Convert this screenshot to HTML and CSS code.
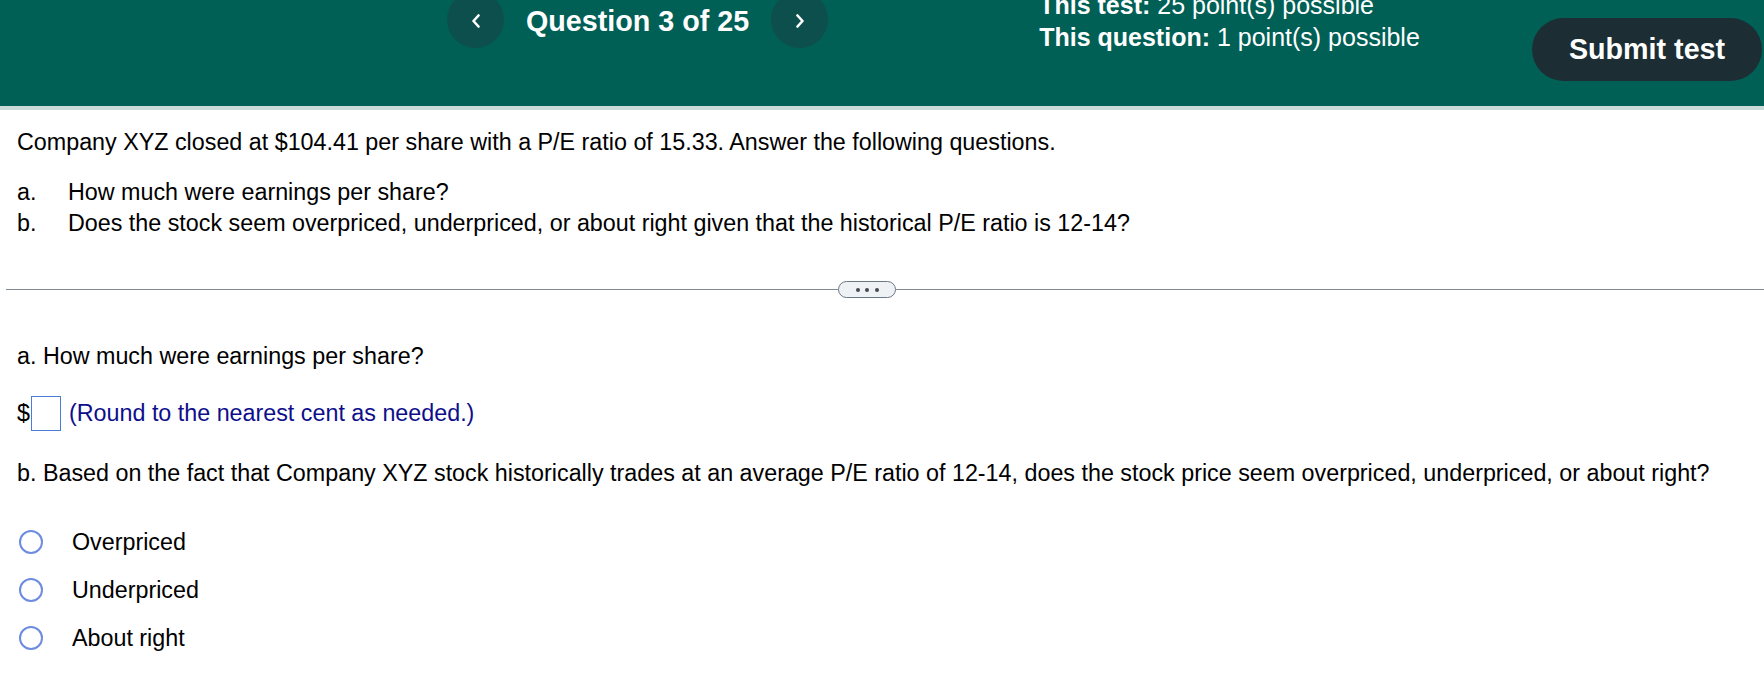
FILE: index.html
```html
<!DOCTYPE html>
<html>
<head>
<meta charset="utf-8">
<link rel="stylesheet" href="styles.css">
</head>
<body>
<header class="topbar">
  <div class="nav">
    <button class="navbtn" aria-label="Previous">
      <svg width="10" height="14" viewBox="0 0 10 14"><polyline points="7.5,1.5 2.5,7 7.5,12.5" fill="none" stroke="#fff" stroke-width="2.6" stroke-linecap="round" stroke-linejoin="round"/></svg>
    </button>
    <h1 class="qtitle">Question 3 of 25</h1>
    <button class="navbtn" aria-label="Next">
      <svg width="10" height="14" viewBox="0 0 10 14"><polyline points="2.5,1.5 7.5,7 2.5,12.5" fill="none" stroke="#fff" stroke-width="2.6" stroke-linecap="round" stroke-linejoin="round"/></svg>
    </button>
  </div>
  <div class="points">
    <div><b>This test:</b> 25 point(s) possible</div>
    <div><b>This question:</b> 1 point(s) possible</div>
  </div>
  <div class="rightcol">
    <svg class="topicon" width="20" height="14" viewBox="0 0 20 14"><path d="M3 0 Q3 4 10 4 Q17 4 17 0" fill="none" stroke="#fff" stroke-width="2.4"/><circle cx="10" cy="-2" r="3" fill="#fff"/></svg>
    <button class="submit">Submit test</button>
  </div>
</header>

<main class="content">
  <p class="stem">Company XYZ closed at $104.41 per share with a P/E ratio of 15.33. Answer the following questions.</p>
  <ol class="parts">
    <li><span class="lbl">a.</span><span>How much were earnings per share?</span></li>
    <li><span class="lbl">b.</span><span>Does the stock seem overpriced, underpriced, or about right given that the historical P/E ratio is 12-14?</span></li>
  </ol>

  <div class="divider">
    <span class="line line-left"></span>
    <button class="more" aria-label="More"><i></i><i></i><i></i></button>
    <span class="line line-right"></span>
  </div>

  <p class="q">a. How much were earnings per share?</p>
  <div class="answer">
    <span class="dollar">$</span>
    <span class="inputbox"></span>
    <span class="hint">(Round to the nearest cent as needed.)</span>
  </div>

  <p class="q qb">b. Based on the fact that Company XYZ stock historically trades at an average P/E ratio of 12-14, does the stock price seem overpriced, underpriced, or about right?</p>
  <div class="options">
    <label class="opt"><span class="radio"></span><span>Overpriced</span></label>
    <label class="opt"><span class="radio"></span><span>Underpriced</span></label>
    <label class="opt"><span class="radio"></span><span>About right</span></label>
  </div>
</main>
</body>
</html>
```
FILE: styles.css
```css
* { box-sizing: border-box; }
html, body { margin: 0; padding: 0; }
body {
  width: 1764px;
  height: 674px;
  overflow: hidden;
  background: #fff;
  color: #000;
  font-family: "Liberation Sans", Arial, sans-serif;
}

.topbar {
  height: 110px;
  background: #006056;
  border-bottom: 4px solid #c9dcda;
  display: flex;
  align-items: flex-start;
  overflow: hidden;
  color: #fff;
}

.nav {
  display: flex;
  align-items: center;
  margin-left: 447px;
  margin-top: -9px;
  gap: 22px;
  height: 57px;
}
.navbtn {
  width: 57px;
  height: 57px;
  border-radius: 50%;
  border: none;
  background: #0d4f4c;
  padding: 0;
  display: flex;
  align-items: center;
  justify-content: center;
}
.navbtn svg { display: block; margin-top: 3px; }
.qtitle {
  margin: 0;
  font-size: 28.7px;
  font-weight: bold;
  line-height: 57px;
  padding-top: 3px;
  white-space: nowrap;
}

.points {
  margin-left: 211px;
  margin-top: -11px;
  font-size: 25px;
  line-height: 32px;
  white-space: nowrap;
}

.rightcol {
  margin-left: auto;
  margin-right: 2px;
  display: flex;
  flex-direction: column;
  align-items: flex-end;
}
.topicon {
  display: block;
  margin-top: -9px;
  margin-right: 51px;
  height: 14px;
}
.submit {
  margin-top: 13px;
  width: 230px;
  height: 63px;
  border: none;
  border-radius: 32px;
  background: #1c2d34;
  color: #fff;
  font-family: "Liberation Sans", Arial, sans-serif;
  font-size: 28.7px;
  font-weight: bold;
  padding: 0;
}

.content {
  padding-left: 17px;
  font-size: 23.3px;
  line-height: 31px;
}
.stem { margin: 17px 0 0 0; }
.parts {
  list-style: none;
  margin: 19px 0 0 0;
  padding: 0;
}
.parts li { display: flex; }
.lbl { width: 51px; flex: none; }

.divider {
  display: flex;
  align-items: center;
  margin-left: -11px;
  margin-top: 42px;
  height: 17px;
}
.line { height: 1px; background: #7f8a94; }
.line-left { width: 832px; }
.line-right { flex: 1; }
.more {
  width: 58px;
  height: 17px;
  border: 1.5px solid #6b7785;
  border-radius: 9px;
  background: #eef2f5;
  padding: 0;
  display: flex;
  align-items: center;
  justify-content: center;
  gap: 5.5px;
}
.more i {
  width: 4px;
  height: 4px;
  border-radius: 50%;
  background: #454b52;
  display: block;
}

.q { margin: 0; }
.divider + .q { margin-top: 43px; }
.answer {
  display: flex;
  align-items: center;
  margin-top: 24px;
  height: 35px;
}
.dollar { width: 14px; }
.inputbox {
  width: 30px;
  height: 35px;
  border: 1px solid #4a7ed6;
  background: #fff;
}
.hint {
  margin-left: 8px;
  color: #0e0e8c;
}
.qb { margin-top: 27px; }

.options {
  margin-top: 29px;
  display: flex;
  flex-direction: column;
}
.opt {
  display: flex;
  align-items: center;
  height: 48px;
}
.radio {
  width: 24px;
  height: 24px;
  border-radius: 50%;
  border: 2px solid #6d8be0;
  margin-left: 2px;
  margin-right: 29px;
  flex: none;
}
```
